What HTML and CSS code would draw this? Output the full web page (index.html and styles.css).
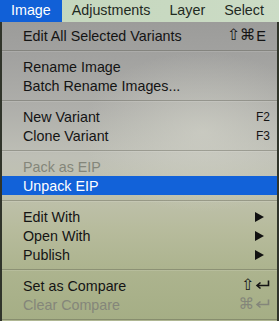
FILE: index.html
```html
<!DOCTYPE html>
<html>
<head>
<meta charset="utf-8">
<link rel="stylesheet" href="styles.css">
</head>
<body>
<div class="menubar">
  <span class="mb-item active">Image</span>
  <span class="mb-item">Adjustments</span>
  <span class="mb-item">Layer</span>
  <span class="mb-item">Select</span>
</div>
<div class="stage">
  <div class="menu">
    <div class="item"><span class="label">Edit All Selected Variants</span><span class="key k-e"><span class="sym">⇧⌘</span>E</span></div>
    <div class="sep"></div>
    <div class="item"><span class="label">Rename Image</span></div>
    <div class="item"><span class="label">Batch Rename Images...</span></div>
    <div class="sep"></div>
    <div class="item"><span class="label">New Variant</span><span class="key fkey">F2</span></div>
    <div class="item"><span class="label">Clone Variant</span><span class="key fkey">F3</span></div>
    <div class="sep"></div>
    <div class="item disabled"><span class="label">Pack as EIP</span></div>
    <div class="item selected"><span class="label">Unpack EIP</span></div>
    <div class="sep"></div>
    <div class="item"><span class="label">Edit With</span><span class="tri"></span></div>
    <div class="item"><span class="label">Open With</span><span class="tri"></span></div>
    <div class="item"><span class="label">Publish</span><span class="tri"></span></div>
    <div class="sep"></div>
    <div class="item"><span class="label">Set as Compare</span><span class="key k-ret"><span class="sym">⇧</span><svg class="ret" width="15" height="10" viewBox="0 0 15 10"><path d="M13.5 0.5 V5.5 H2.5 M5.5 2.5 L2 5.5 L5.5 8.5" fill="none" stroke="currentColor" stroke-width="1.6"/></svg></span></div>
    <div class="item disabled"><span class="label">Clear Compare</span><span class="key k-ret"><span class="sym">⌘</span><svg class="ret" width="15" height="10" viewBox="0 0 15 10"><path d="M13.5 0.5 V5.5 H2.5 M5.5 2.5 L2 5.5 L5.5 8.5" fill="none" stroke="currentColor" stroke-width="1.6"/></svg></span></div>
    <div class="sep"></div>
  </div>
</div>
</body>
</html>
```

FILE: styles.css
```css
* { box-sizing: border-box; }
html, body {
  margin: 0;
  padding: 0;
  width: 279px;
  height: 321px;
  overflow: hidden;
  background: #30342a;
  font-family: "Liberation Sans", Arial, "DejaVu Sans", sans-serif;
  font-size: 14.3px;
  color: #141414;
}
.menubar {
  height: 22px;
  display: flex;
  align-items: center;
  background: linear-gradient(90deg, #c4d7bd 0%, #c8d9c1 60%, #ccdcc6 100%);
}
.mb-item {
  height: 22px;
  line-height: 21px;
  padding: 0 9px 0 10px;
  color: #1f2a1f;
}
.mb-item.active {
  background: #1160d7;
  color: #fff;
  padding: 0 11px 0 11px;
}
.stage {
  height: 299px;
  padding: 0 2px;
}
.menu {
  width: 275px;
  height: 299px;
  padding-top: 4px;
  display: flex;
  flex-direction: column;
  background:
    radial-gradient(ellipse 120px 80px at 200px 110px, rgba(215,216,205,0.55), rgba(215,216,205,0) 100%),
    linear-gradient(180deg, #9c9c9a 0%, #a2a2a0 12%, #aeaeaa 28%, #bebfb6 45%, #c0c2b0 55%, #b8bc9e 68%, #adb48f 82%, #a5ae85 100%);
}
.item {
  flex: 0 0 19px;
  height: 19px;
  display: flex;
  align-items: center;
  padding: 0 7px 0 21px;
}
.label { flex: 1; white-space: nowrap; }
.item.disabled { color: #84867a; }
.item.selected { background: #1262d9; color: #fff; }
.key { display: flex; align-items: center; }
.sym { font-family: "DejaVu Sans", sans-serif; font-size: 15.5px; line-height: 1; }
.k-e { font-size: 14.5px; margin-right: 4px; gap: 1px; }
.fkey { font-size: 12px; }
.ret { display: block; margin-left: 1px; margin-top: -2px; }
.tri {
  width: 0;
  height: 0;
  border-top: 5px solid transparent;
  border-bottom: 5px solid transparent;
  border-left: 9px solid #111;
  margin-right: 6px;
}
.sep {
  flex: 0 0 12px;
  height: 12px;
}
.sep::before {
  content: "";
  display: block;
  margin-top: 5px;
  height: 1px;
  background: rgba(80, 80, 70, 0.35);
  box-shadow: 0 1px 0 rgba(255,255,255,0.12);
}
```
